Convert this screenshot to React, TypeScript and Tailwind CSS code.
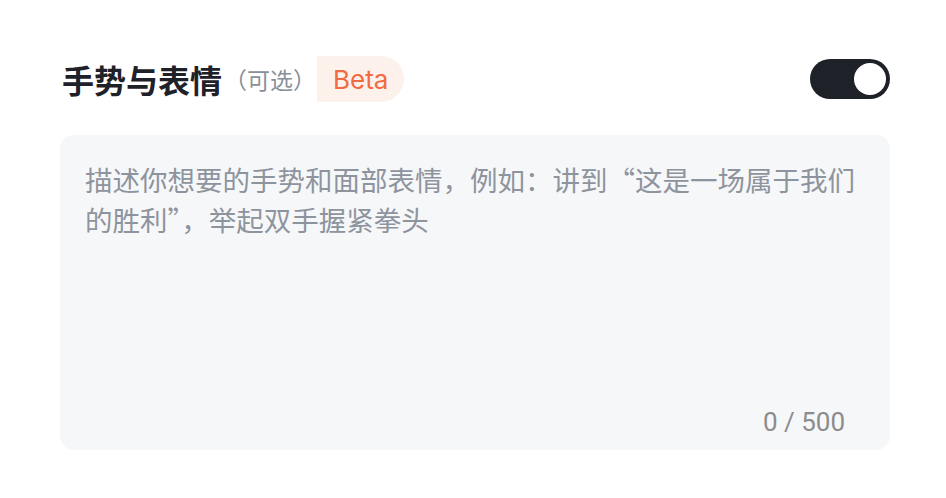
import { useState } from 'react';

const cjk = { fontFamily: '"Noto Sans CJK SC", "Noto Sans", sans-serif' };

export default function App() {
  const [on, setOn] = useState(true);
  const [text, setText] = useState('');

  return (
    <div className="w-[946px] h-[498px] bg-white pl-[60px] pr-[56px] pt-[56px]" style={cjk}>
      {/* Header */}
      <div className="flex items-center justify-between h-[46px]">
        <div className="flex items-center">
          <h2 className="pl-[2px] text-[32px] font-bold text-[#1f2128] leading-none">手势与表情</h2>
          <span className="ml-[2px] text-[23px] text-[#8a9099] leading-none">（可选）</span>
          <span
            className="ml-[1px] h-[46px] px-[16px] flex items-center bg-[#fdf1ec] text-[#f26a3f] text-[26px] rounded-tl-[20px] rounded-r-full"
            style={{ fontFamily: 'Inter, "Noto Sans", sans-serif' }}
          >
            Beta
          </span>
        </div>
        <button
          onClick={() => setOn(!on)}
          className={`w-[80px] h-[40px] rounded-full p-[4px] flex items-center ${
            on ? 'bg-[#1f2128] justify-end' : 'bg-gray-300 justify-start'
          }`}
        >
          <span className="w-[32px] h-[32px] rounded-full bg-white block" />
        </button>
      </div>

      {/* Textarea */}
      <div className="relative mt-[33px] h-[315px] bg-[#f6f7f9] rounded-[14px]">
        <textarea
          value={text}
          onChange={(e) => setText(e.target.value.slice(0, 500))}
          placeholder="描述你想要的手势和面部表情，例如：讲到“这是一场属于我们的胜利”，举起双手握紧拳头"
          className="w-full h-full resize-none bg-transparent outline-none pl-[25px] pr-[26px] pt-[24px] text-[27.5px] leading-[40px] text-[#1f2128] placeholder:text-[#8e949d]"
          style={cjk}
        />
        <span
          className="absolute right-[45px] bottom-[15px] text-[26px] text-[#8c8c8c] leading-none"
          style={{ fontFamily: 'Roboto, "Liberation Sans", sans-serif' }}
        >
          {text.length} / 500
        </span>
      </div>
    </div>
  );
}
